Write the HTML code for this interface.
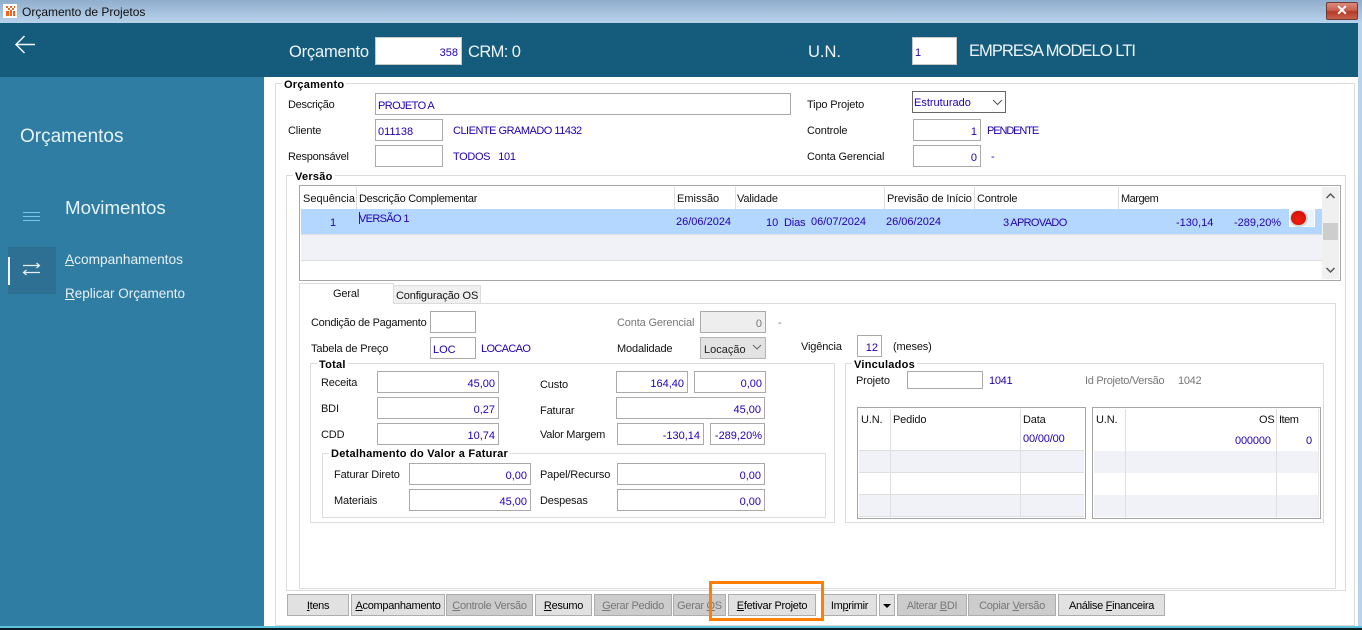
<!DOCTYPE html>
<html lang="pt"><head><meta charset="utf-8"><title>Orçamento de Projetos</title>
<style>
html,body{margin:0;padding:0}
body{width:1362px;height:630px;overflow:hidden;position:relative;background:#fff;font:11px/14px "Liberation Sans",sans-serif;color:#111}
div,span.a{position:absolute;box-sizing:border-box;white-space:nowrap}
.t{height:14px;margin-top:1px;letter-spacing:-.15px}
.n{letter-spacing:0}
.x{margin-top:0;letter-spacing:0}
.w{letter-spacing:-.27px}
.b{color:#2200b0}
.c{letter-spacing:-.65px}
.g{color:#777}
.i{background:#fff;border:1px solid #aaa;height:22px;color:#2200b0;text-align:right;padding:5px 3px 0 2px;line-height:15px}
.l{text-align:left}
.fs{border:1px solid #dcdcdc}
.lg{font-weight:bold;color:#000;background:#fff;padding:0 2px;height:13px;line-height:13px;letter-spacing:.25px;margin-top:1px}
.btn{top:594px;height:22px;background:#e1e1e1;border:1px solid #adadad;text-align:center;line-height:22px;color:#000;letter-spacing:-.3px}
.d{background:#cccccc;color:#777}
.s{background:#dfdfdf;width:1px}
.h{background:#dfdfdf;height:1px}
.z{background:#f0f2f8}
u{text-underline-offset:1px}
</style></head><body>

<!-- title bar -->
<div style="left:0;top:0;width:1362px;height:23px;background:linear-gradient(#90adcd,#b9d3ec)"></div>
<div style="left:3px;top:4px;width:14px;height:14px;background:#fff"></div>
<svg style="position:absolute;left:5px;top:5px" width="11" height="12" viewBox="0 0 11 12"><path d="M1 1h2v2H1zM5 1h2v2H5zM9 1h1v2H9zM3 3h2v2H3zM7 3h2v2H7zM1 6h3v5H1zM5 5h2v6H5zM8 6h2v5H8z" fill="#f0641e"/></svg>
<div class="t x" style="left:22px;top:5px;font-size:12px;color:#111">Orçamento de Projetos</div>
<div style="left:1326px;top:2px;width:32px;height:18px;background:linear-gradient(#d98a7c 0,#c9604f 45%,#b53a28 55%,#c8604c 100%);border:1px solid #6d3b36;border-radius:2px;color:#fff;text-align:center;font:bold 14px/15px 'Liberation Sans',sans-serif">✕</div>

<!-- frame -->
<div style="left:1358px;top:23px;width:4px;height:607px;background:#b9d3ec"></div>
<div style="left:0;top:626px;width:1362px;height:2px;background:#5fc4dc"></div>
<div style="left:0;top:628px;width:1362px;height:2px;background:#0b1a24"></div>

<!-- header -->
<div style="left:0;top:23px;width:1358px;height:54px;background:#155b7c"></div>
<svg style="position:absolute;left:14px;top:35px" width="22" height="20" viewBox="0 0 22 20"><path d="M21 9.500H2M10.500 1L2 9.500 10.500 18" fill="none" stroke="#f2f6f8" stroke-width="1.500"/></svg>
<div class="t x" style="left:289px;top:43px;height:18px;font-size:16.500px;line-height:18px;color:#eef5f8;letter-spacing:-.2px">Orçamento</div>
<div class="i" style="left:375px;top:37px;width:87px;height:28px;border-color:#c8c8c8;padding-top:8px">358</div>
<div class="t x" style="left:468px;top:43px;height:18px;font-size:16.500px;line-height:18px;color:#eef5f8;letter-spacing:-.6px">CRM: 0</div>
<div class="t x" style="left:808px;top:43px;height:18px;font-size:16.500px;line-height:18px;color:#eef5f8">U.N.</div>
<div class="i l" style="left:912px;top:37px;width:45px;height:28px;border-color:#c8c8c8;padding-top:8px">1</div>
<div class="t x" style="left:969px;top:42px;height:18px;font-size:16.500px;line-height:18px;color:#eef5f8;letter-spacing:-.95px">EMPRESA MODELO LTI</div>

<!-- sidebar -->
<div style="left:0;top:77px;width:264px;height:549px;background:#2f7da3"></div>
<div class="t x" style="left:20px;top:125px;height:24px;font-size:19px;line-height:24px;color:#e8f2f6">Orçamentos</div>
<div style="left:23px;top:212px;width:17px;height:1px;background:#7cc4f0"></div>
<div style="left:23px;top:216px;width:17px;height:1px;background:#7cc4f0"></div>
<div style="left:23px;top:220px;width:17px;height:1px;background:#7cc4f0"></div>
<div class="t x" style="left:65px;top:197px;height:22px;font-size:18.700px;line-height:22px;color:#e8f4fa">Movimentos</div>
<div style="left:8px;top:247px;width:48px;height:47px;background:#2d7094"></div>
<div style="left:8px;top:257px;width:2px;height:28px;background:#f0f4f6"></div>
<svg style="position:absolute;left:22px;top:262px" width="19" height="15" viewBox="0 0 19 15"><path d="M1 3.500H17M14.500 1L17.500 3.500 14.500 6M18 10.500H2M4.500 8L1.500 10.500 4.500 13" fill="none" stroke="#e8f0f4" stroke-width="1.200"/></svg>
<div class="t x" style="left:65px;top:252px;height:16px;font-size:13.700px;line-height:16px;color:#e8f0f4"><u>A</u>companhamentos</div>
<div class="t x" style="left:65px;top:286px;height:16px;font-size:13.500px;line-height:16px;color:#e8f0f4"><u>R</u>eplicar Orçamento</div>

<!-- Orçamento fieldset -->
<div class="fs" style="left:275px;top:83px;width:1080px;height:543px"></div>
<div class="lg" style="left:282px;top:78px">Orçamento</div>
<div class="t w" style="left:288px;top:97px">Descrição</div>
<div class="i l c" style="left:375px;top:93px;width:416px;letter-spacing:-.6px">PROJETO A</div>
<div class="t" style="left:288px;top:123px">Cliente</div>
<div class="i l" style="left:375px;top:119px;width:68px">011138</div>
<div class="t b" style="left:453px;top:123px;letter-spacing:-.5px">CLIENTE GRAMADO 11432</div>
<div class="t w" style="left:288px;top:149px">Responsável</div>
<div class="i" style="left:375px;top:145px;width:68px"></div>
<div class="t b" style="left:453px;top:149px;letter-spacing:-.35px">TODOS&nbsp;&nbsp;&nbsp;101</div>

<div class="t" style="left:807px;top:97px">Tipo Projeto</div>
<div class="i l" style="left:912px;top:91px;width:94px;border-color:#666;padding:4px 1px 0">Estruturado</div>
<svg style="position:absolute;left:992px;top:99px" width="11" height="7" viewBox="0 0 11 7"><path d="M1 1l4.500 4.500L10 1" fill="none" stroke="#555" stroke-width="1"/></svg>
<div class="t" style="left:807px;top:123px">Controle</div>
<div class="i" style="left:913px;top:119px;width:68px">1</div>
<div class="t b" style="left:987px;top:123px;letter-spacing:-1.1px">PENDENTE</div>
<div class="t" style="left:807px;top:149px">Conta Gerencial</div>
<div class="i" style="left:913px;top:145px;width:68px">0</div>
<div class="t b" style="left:991px;top:149px">-</div>

<!-- Versão fieldset -->
<div class="fs" style="left:286px;top:175px;width:1060px;height:416px"></div>
<div class="lg" style="left:293px;top:170px">Versão</div>

<!-- grid -->
<div style="left:299px;top:185px;width:1042px;height:96px;border:1px solid #a6a6a6;background:#fff"></div>
<div style="left:301px;top:209px;width:1021px;height:25px;background:#b3d7fe"></div>
<div style="left:301px;top:235px;width:1021px;height:25px;background:#f1f2f8"></div>
<div class="h" style="left:301px;top:260px;width:1021px"></div>
<div class="h" style="left:301px;top:234px;width:1021px"></div>
<div class="s" style="left:356px;top:187px;height:22px"></div>
<div class="s" style="left:674px;top:187px;height:22px"></div>
<div class="s" style="left:735px;top:187px;height:22px"></div>
<div class="s" style="left:884px;top:187px;height:22px"></div>
<div class="s" style="left:974px;top:187px;height:22px"></div>
<div class="s" style="left:1118px;top:187px;height:22px"></div>
<div class="t n" style="left:303px;top:191px">Sequência</div>
<div class="t w" style="left:359px;top:191px">Descrição Complementar</div>
<div class="t n" style="left:677px;top:191px">Emissão</div>
<div class="t" style="left:737px;top:191px">Validade</div>
<div class="t" style="left:887px;top:191px">Previsão de Início</div>
<div class="t" style="left:977px;top:191px">Controle</div>
<div class="t w" style="left:1121px;top:191px;letter-spacing:-.5px">Margem</div>
<div class="t b" style="left:330px;top:215px">1</div>
<div style="left:359px;top:212px;width:1px;height:12px;background:#333"></div>
<div class="t b c" style="left:359px;top:211px">VERSÃO 1</div>
<div class="t b n" style="left:676px;top:214px">26/06/2024</div>
<div class="t b n" style="left:766px;top:215px">10</div>
<div class="t b" style="left:784px;top:215px">Dias</div>
<div class="t b n" style="left:811px;top:214px">06/07/2024</div>
<div class="t b n" style="left:886px;top:214px">26/06/2024</div>
<div class="t b c" style="left:1003px;top:215px">3 APROVADO</div>
<div class="t b n" style="left:1176px;top:215px">-130,14</div>
<div class="t b n" style="left:1234px;top:215px">-289,20%</div>
<div style="left:1289px;top:209px;width:26px;height:18px;background:#eaf2fb;border:1px solid #fff"></div>
<div style="left:1290px;top:210px;width:18px;height:17px;border-radius:9px;background:#d6d6d6"></div>
<div style="left:1291px;top:211px;width:15px;height:14px;border-radius:8px;background:radial-gradient(circle at 45% 65%,#f02010,#c80d05)"></div>
<!-- scrollbar -->
<div style="left:1322px;top:187px;width:17px;height:92px;background:#f0f0f0"></div>
<div style="left:1323px;top:223px;width:15px;height:17px;background:#cdcdcd"></div>
<svg style="position:absolute;left:1325px;top:192px" width="11" height="8" viewBox="0 0 11 8"><path d="M1.500 6l4-4 4 4" fill="none" stroke="#555" stroke-width="1.500"/></svg>
<svg style="position:absolute;left:1325px;top:266px" width="11" height="8" viewBox="0 0 11 8"><path d="M1.500 2l4 4 4-4" fill="none" stroke="#555" stroke-width="1.500"/></svg>

<!-- tabs -->
<div style="left:299px;top:303px;width:1037px;height:286px;border:1px solid #dcdcdc;background:#fff"></div>
<div style="left:393px;top:285px;width:88px;height:19px;background:#f0f0f0;border:1px solid #dcdcdc"></div>
<div style="left:299px;top:283px;width:95px;height:21px;background:#fff;border:1px solid #dcdcdc;border-bottom:0"></div>
<div class="t" style="left:333px;top:286px">Geral</div>
<div class="t" style="left:396px;top:288px">Configuração OS</div>

<div class="t w" style="left:311px;top:315px">Condição de Pagamento</div>
<div class="i" style="left:430px;top:311px;width:46px"></div>
<div class="t" style="left:311px;top:341px">Tabela de Preço</div>
<div class="i l" style="left:430px;top:337px;width:46px">LOC</div>
<div class="t b c" style="left:481px;top:341px">LOCACAO</div>
<div class="t g" style="left:617px;top:315px">Conta Gerencial</div>
<div class="i" style="left:700px;top:311px;width:66px;background:#eeeeee;color:#777">0</div>
<div class="t g" style="left:778px;top:315px">-</div>
<div class="t" style="left:617px;top:341px">Modalidade</div>
<div class="i l" style="left:700px;top:337px;width:66px;background:#e3e3e3;color:#222;border-color:#b5b5b5;padding:5px 3px 0">Locação</div>
<svg style="position:absolute;left:752px;top:344px" width="10" height="6" viewBox="0 0 10 6"><path d="M1 1l4 4 4-4" fill="none" stroke="#666"/></svg>
<div class="t" style="left:801px;top:339px">Vigência</div>
<div class="i" style="left:857px;top:335px;width:25px">12</div>
<div class="t" style="left:893px;top:339px">(meses)</div>

<!-- Total -->
<div class="fs" style="left:310px;top:363px;width:525px;height:160px"></div>
<div class="lg" style="left:317px;top:358px">Total</div>
<div class="t" style="left:321px;top:375px">Receita</div>
<div class="i" style="left:377px;top:371px;width:122px">45,00</div>
<div class="t" style="left:321px;top:401px">BDI</div>
<div class="i" style="left:377px;top:397px;width:122px">0,27</div>
<div class="t" style="left:321px;top:427px">CDD</div>
<div class="i" style="left:377px;top:423px;width:122px">10,74</div>
<div class="t" style="left:540px;top:377px">Custo</div>
<div class="i" style="left:616px;top:371px;width:72px">164,40</div>
<div class="i" style="left:694px;top:371px;width:72px">0,00</div>
<div class="t" style="left:540px;top:403px">Faturar</div>
<div class="i" style="left:616px;top:397px;width:149px">45,00</div>
<div class="t w" style="left:540px;top:427px">Valor Margem</div>
<div class="i" style="left:617px;top:423px;width:87px">-130,14</div>
<div class="i" style="left:710px;top:423px;width:55px;padding-right:2px">-289,20%</div>

<div class="fs" style="left:322px;top:453px;width:504px;height:65px"></div>
<div class="lg" style="left:329px;top:447px">Detalhamento do Valor a Faturar</div>
<div class="t" style="left:334px;top:467px">Faturar Direto</div>
<div class="i" style="left:409px;top:463px;width:122px">0,00</div>
<div class="t" style="left:334px;top:493px">Materiais</div>
<div class="i" style="left:409px;top:489px;width:122px">45,00</div>
<div class="t" style="left:540px;top:467px">Papel/Recurso</div>
<div class="i" style="left:617px;top:463px;width:148px">0,00</div>
<div class="t" style="left:540px;top:493px">Despesas</div>
<div class="i" style="left:617px;top:489px;width:148px">0,00</div>

<!-- Vinculados -->
<div class="fs" style="left:845px;top:363px;width:479px;height:160px"></div>
<div class="lg" style="left:852px;top:358px">Vinculados</div>
<div class="t" style="left:856px;top:373px">Projeto</div>
<div class="i" style="left:907px;top:371px;width:76px;height:18px"></div>
<div class="t b" style="left:989px;top:373px;letter-spacing:-.3px">1041</div>
<div class="t g" style="left:1085px;top:373px;letter-spacing:-.3px">Id Projeto/Versão</div>
<div class="t g" style="left:1178px;top:373px;letter-spacing:-.3px">1042</div>

<div style="left:857px;top:407px;width:229px;height:112px;border:1px solid #a6a6a6;background:#fff"></div>
<div class="z" style="left:859px;top:451px;width:225px;height:22px"></div>
<div class="z" style="left:859px;top:495px;width:225px;height:22px"></div>
<div class="h" style="left:859px;top:450px;width:225px"></div>
<div class="h" style="left:859px;top:472px;width:225px"></div>
<div class="h" style="left:859px;top:494px;width:225px"></div>
<div class="h" style="left:859px;top:516px;width:225px"></div>
<div class="s" style="left:890px;top:409px;height:108px"></div>
<div class="s" style="left:1020px;top:409px;height:108px"></div>
<div class="t" style="left:861px;top:412px">U.N.</div>
<div class="t" style="left:893px;top:412px">Pedido</div>
<div class="t" style="left:1023px;top:412px">Data</div>
<div class="t b" style="left:1023px;top:431px">00/00/00</div>

<div style="left:1092px;top:407px;width:229px;height:112px;border:1px solid #a6a6a6;background:#fff"></div>
<div class="z" style="left:1094px;top:451px;width:225px;height:22px"></div>
<div class="z" style="left:1094px;top:495px;width:225px;height:22px"></div>
<div class="s" style="left:1125px;top:409px;height:108px"></div>
<div class="s" style="left:1276px;top:409px;height:108px"></div>
<div class="s" style="left:1318px;top:409px;height:108px;background:#e8e8e8"></div>
<div class="t" style="left:1096px;top:412px">U.N.</div>
<div class="t" style="left:1259px;top:412px">OS</div>
<div class="t" style="left:1279px;top:412px;letter-spacing:-.5px">Item</div>
<div class="t b" style="left:1235px;top:433px">000000</div>
<div class="t b" style="left:1306px;top:433px">0</div>

<!-- buttons -->
<div class="btn" style="left:287px;width:62px"><u>I</u>tens</div>
<div class="btn" style="left:351px;width:94px"><u>A</u>companhamento</div>
<div class="btn d" style="left:446px;width:87px"><u>C</u>ontrole Versão</div>
<div class="btn" style="left:535px;width:57px"><u>R</u>esumo</div>
<div class="btn d" style="left:594px;width:78px"><u>G</u>erar Pedido</div>
<div class="btn d" style="left:673px;width:53px">Gerar <u>O</u>S</div>
<div class="btn" style="left:728px;width:88px"><u>E</u>fetivar Projeto</div>
<div class="btn" style="left:822px;width:55px">Im<u>p</u>rimir</div>
<div class="btn" style="left:879px;width:16px"></div>
<div style="left:883px;top:604px;width:0;height:0;border:4px solid transparent;border-top:4px solid #000;border-bottom:0"></div>
<div class="btn d" style="left:897px;width:70px">Alterar <u>B</u>DI</div>
<div class="btn d" style="left:968px;width:88px">Copiar <u>V</u>ersão</div>
<div class="btn" style="left:1058px;width:107px">Análise <u>F</u>inanceira</div>

<!-- highlight -->
<div style="left:709px;top:581px;width:115px;height:40px;border:3px solid #ff8000"></div>
</body></html>
